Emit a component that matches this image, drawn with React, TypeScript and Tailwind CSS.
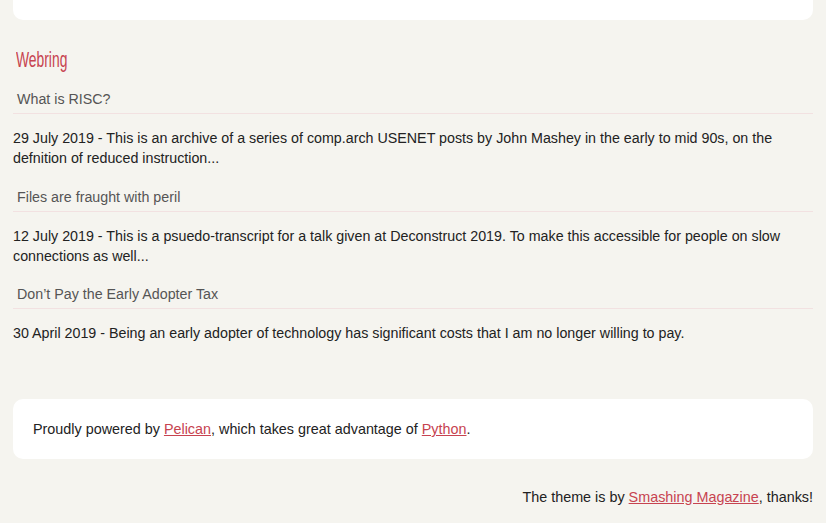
const posts = [
  {
    title: 'What is RISC?',
    summary:
      '29 July 2019 - This is an archive of a series of comp.arch USENET posts by John Mashey in the early to mid 90s, on the defnition of reduced instruction...',
  },
  {
    title: 'Files are fraught with peril',
    summary:
      '12 July 2019 - This is a psuedo-transcript for a talk given at Deconstruct 2019. To make this accessible for people on slow connections as well...',
  },
  {
    title: 'Don\u2019t Pay the Early Adopter Tax',
    summary:
      '30 April 2019 - Being an early adopter of technology has significant costs that I am no longer willing to pay.',
  },
];

export default function App() {
  return (
    <div className="min-h-[523px] bg-[#f5f4ef] px-[13px] text-[14.27px] leading-[20px] text-[#222] [font-family:'Liberation_Sans',Arial,sans-serif]">
      <div className="h-[20px] rounded-b-[10px] bg-white" />

      <section className="pt-[28px]">
        <h2 className="pl-[3px] text-[22px] leading-[24px] text-[#c74350]">
          <span className="inline-block origin-left scale-x-[0.63]">Webring</span>
        </h2>
        <div className="mt-[17px]">
          {posts.map((p, i) => (
            <div key={i} className={i === 1 ? 'mt-[19px]' : i === 2 ? 'mt-[18px]' : ''}>
              <div className="border-b border-[#f2e1e1] pb-[4px] pl-[4px] text-[#555]">
                {p.title}
              </div>
              <p className="mt-[14px]">{p.summary}</p>
            </div>
          ))}
        </div>
      </section>

      <footer className="mt-[56px] flex h-[60px] items-center rounded-[10px] bg-white px-[20px] text-[14.36px]">
        <p>
          Proudly powered by{' '}
          <a href="#" className="text-[#c74350] underline">Pelican</a>, which takes great advantage of{' '}
          <a href="#" className="text-[#c74350] underline">Python</a>.
        </p>
      </footer>

      <p className="mt-[28px] text-right text-[14.36px]">
        The theme is by{' '}
        <a href="#" className="text-[#c74350] underline">Smashing Magazine</a>, thanks!
      </p>
    </div>
  );
}
